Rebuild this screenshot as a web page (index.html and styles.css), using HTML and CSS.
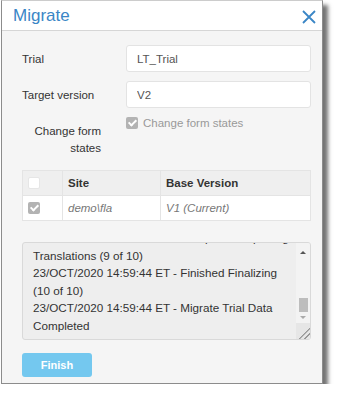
FILE: index.html
```html
<!DOCTYPE html>
<html lang="en-US">
<head>
<meta charset="utf-8">
<title>Migrate</title>
<link rel="stylesheet" href="styles.css">
</head>
<body>
<div class="dialog">

  <div class="dialog-head">
    <span class="dialog-title">Migrate</span>
    <svg class="close" width="16" height="16" viewBox="0 0 16 16">
      <path d="M2 2 L14 14 M14 2 L2 14" stroke="#3a86c6" stroke-width="1.8" fill="none"/>
    </svg>
  </div>

  <div class="dialog-body">
    <div class="form-row">
      <label class="form-label">Trial</label>
      <input class="text-input" type="text" value="LT_Trial" readonly>
    </div>
    <div class="form-row">
      <label class="form-label">Target version</label>
      <input class="text-input" type="text" value="V2" readonly>
    </div>
    <div class="check-row">
      <label class="check-label">Change form states</label>
      <div class="check-opt">
        <span class="box checked"></span>
        <span>Change form states</span>
      </div>
    </div>

    <table class="sites">
      <tr>
        <th class="col-check"><span class="box empty"></span></th>
        <th class="col-site">Site</th>
        <th>Base Version</th>
      </tr>
      <tr>
        <td class="col-check"><span class="box checked"></span></td>
        <td><em>demo\fla</em></td>
        <td><em>V1 (Current)</em></td>
      </tr>
    </table>

    <div class="log">
      <div class="log-text">
        <div class="cut">23/OCT/2020 14:59:44 ET - Completed Importing</div>
        Translations (9 of 10)<br>
        23/OCT/2020 14:59:44 ET - Finished Finalizing<br>
        (10 of 10)<br>
        23/OCT/2020 14:59:44 ET - Migrate Trial Data<br>
        Completed
      </div>
      <div class="scrollbar">
        <span class="arrow up"></span>
        <span class="track"><span class="thumb"></span></span>
        <span class="arrow down"></span>
        <span class="grip"></span>
      </div>
    </div>

    <button class="finish" type="button">Finish</button>
  </div>

</div>
</body>
</html>
```

FILE: styles.css
```css
body {
  margin: 0;
  background: #fff;
  font-family: "Liberation Sans", Arial, sans-serif;
  font-size: 11.5px;
  color: #333;
}
.dialog {
  width: 320px;
  margin-left: 1px;
  border: 1px solid #8c8c8c;
  border-top-color: #ccc;
  background: #f5f5f5;
  box-shadow: 5px 5px 4px rgba(0, 0, 0, 0.55);
}
.dialog-head {
  display: flex;
  align-items: center;
  justify-content: space-between;
  height: 29px;
  padding: 0 5px 0 11px;
  background: #fff;
  border-bottom: 1px solid #d6d6d6;
}
.dialog-title {
  font-size: 17px;
  color: #3a86c6;
}
.close {
  margin-top: 2px;
}
.dialog-body {
  padding: 14px 11px 6px 20px;
}
.form-row {
  display: flex;
  align-items: center;
  margin-bottom: 9px;
}
.form-label {
  width: 104px;
  flex: none;
}
.text-input {
  flex: 1;
  height: 27px;
  box-sizing: border-box;
  padding: 0 10px;
  border: 1px solid #e3e3e3;
  border-radius: 3px;
  background: #fff;
  font-family: inherit;
  font-size: 11.5px;
  color: #555;
  outline: none;
}
.check-row {
  display: flex;
  align-items: flex-start;
  margin-top: 1px;
}
.check-label {
  width: 70px;
  margin: 6px 25px 0 9px;
  text-align: right;
  line-height: 17px;
}
.check-opt {
  display: flex;
  align-items: center;
  gap: 5px;
  color: #999;
}
.box {
  display: inline-block;
  width: 12px;
  height: 12px;
  border-radius: 2px;
  box-sizing: border-box;
  vertical-align: middle;
}
.box.checked {
  background: #b3b3b3;
  position: relative;
}
.box.checked::after {
  content: "";
  position: absolute;
  left: 4px;
  top: 1px;
  width: 3px;
  height: 6px;
  border: solid #fff;
  border-width: 0 2px 2px 0;
  transform: rotate(45deg);
}
.box.empty {
  background: #fff;
  border: 1px solid #e6e6e6;
}
.sites {
  width: 100%;
  margin-top: 13px;
  border-collapse: collapse;
  background: #fff;
}
.sites th,
.sites td {
  height: 24px;
  padding: 0 5px;
  border: 1px solid #e4e4e4;
  text-align: left;
}
.sites th {
  background: #efefef;
  font-weight: bold;
}
.sites td {
  color: #777;
}
.sites .col-check {
  width: 29px;
}
.sites .col-site {
  width: 87px;
}
.log {
  display: flex;
  height: 96px;
  margin-top: 21px;
  border: 1px solid #d9d9d9;
  border-radius: 3px;
  background: #eeeeee;
  overflow: hidden;
}
.log-text {
  flex: 1;
  min-width: 0;
  padding: 0 10px;
  font-size: 11.7px;
  line-height: 17.5px;
  color: #333;
  overflow: hidden;
}
.log-text .cut {
  margin-top: -14px;
  white-space: nowrap;
}
.scrollbar {
  display: flex;
  flex-direction: column;
  align-items: center;
  width: 14px;
  background: #f3f3f3;
}
.arrow {
  width: 0;
  height: 0;
  margin: 8px 0 3px;
  border-left: 3px solid transparent;
  border-right: 3px solid transparent;
}
.arrow.up {
  border-bottom: 3px solid #555;
}
.arrow.down {
  margin: 4px 0;
  border-top: 3px solid #aaa;
}
.track {
  flex: 1;
  display: flex;
  align-items: flex-end;
}
.thumb {
  width: 9px;
  height: 14px;
  background: #bdbdbd;
}
.grip {
  width: 14px;
  height: 16px;
  background: linear-gradient(135deg, transparent 60%, #999 62%, #999 66%, transparent 68%, transparent 78%, #999 80%, #999 84%, transparent 86%) #e6e6e6;
}
.finish {
  margin-top: 13px;
  width: 70px;
  height: 24px;
  border: none;
  border-radius: 3px;
  background: #74c8ef;
  color: #fff;
  font-family: inherit;
  font-size: 11px;
  font-weight: bold;
}
```
